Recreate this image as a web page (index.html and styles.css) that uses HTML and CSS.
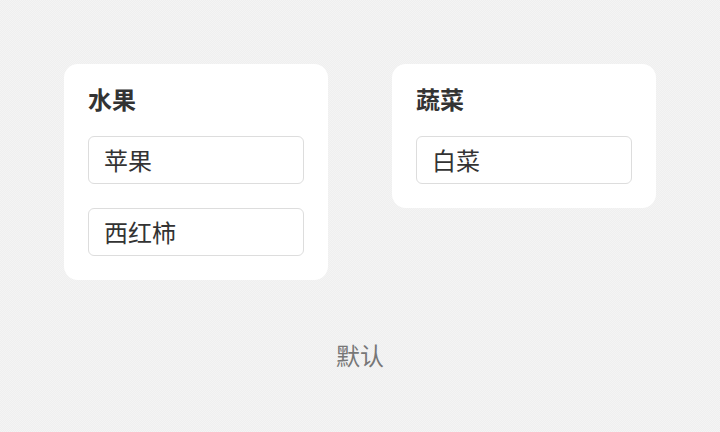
FILE: index.html
```html
<!DOCTYPE html>
<html lang="zh">
<head>
<meta charset="utf-8">
<link rel="stylesheet" href="styles.css">
</head>
<body>
<div class="page">
  <div class="cards">
    <section class="card">
      <h2 class="card-title">水果</h2>
      <div class="field">苹果</div>
      <div class="field">西红柿</div>
    </section>
    <section class="card">
      <h2 class="card-title">蔬菜</h2>
      <div class="field">白菜</div>
    </section>
  </div>
  <div class="footer">默认</div>
</div>
</body>
</html>
```
FILE: styles.css
```css
html, body {
  margin: 0;
  padding: 0;
}
body {
  width: 720px;
  height: 432px;
  overflow: hidden;
  background: #f2f2f2;
  background-image: conic-gradient(#efefef 25%, #f4f4f4 0 50%, #efefef 0 75%, #f4f4f4 0);
  background-size: 2px 2px;
  font-family: "Noto Sans CJK SC", "Noto Sans", sans-serif;
  color: #333;
}
.page {
  padding: 64px 64px 0;
  display: flex;
  flex-direction: column;
}
.cards {
  display: flex;
  gap: 64px;
  align-items: flex-start;
}
.card {
  width: 264px;
  box-sizing: border-box;
  background: #fff;
  border-radius: 14px;
  padding: 24px;
  display: flex;
  flex-direction: column;
}
.card-title {
  margin: 0 0 26px;
  font-size: 24px;
  line-height: 22px;
  font-weight: 700;
  color: #333;
}
.field {
  height: 48px;
  box-sizing: border-box;
  border: 1px solid #ddd;
  border-radius: 6px;
  padding: 0 15px 2px;
  display: flex;
  align-items: center;
  font-size: 24px;
  color: #333;
}
.field + .field {
  margin-top: 24px;
}
.footer {
  margin-top: 52px;
  padding-bottom: 2px;
  text-align: center;
  font-size: 24px;
  line-height: 46px;
  color: #777;
}
```
